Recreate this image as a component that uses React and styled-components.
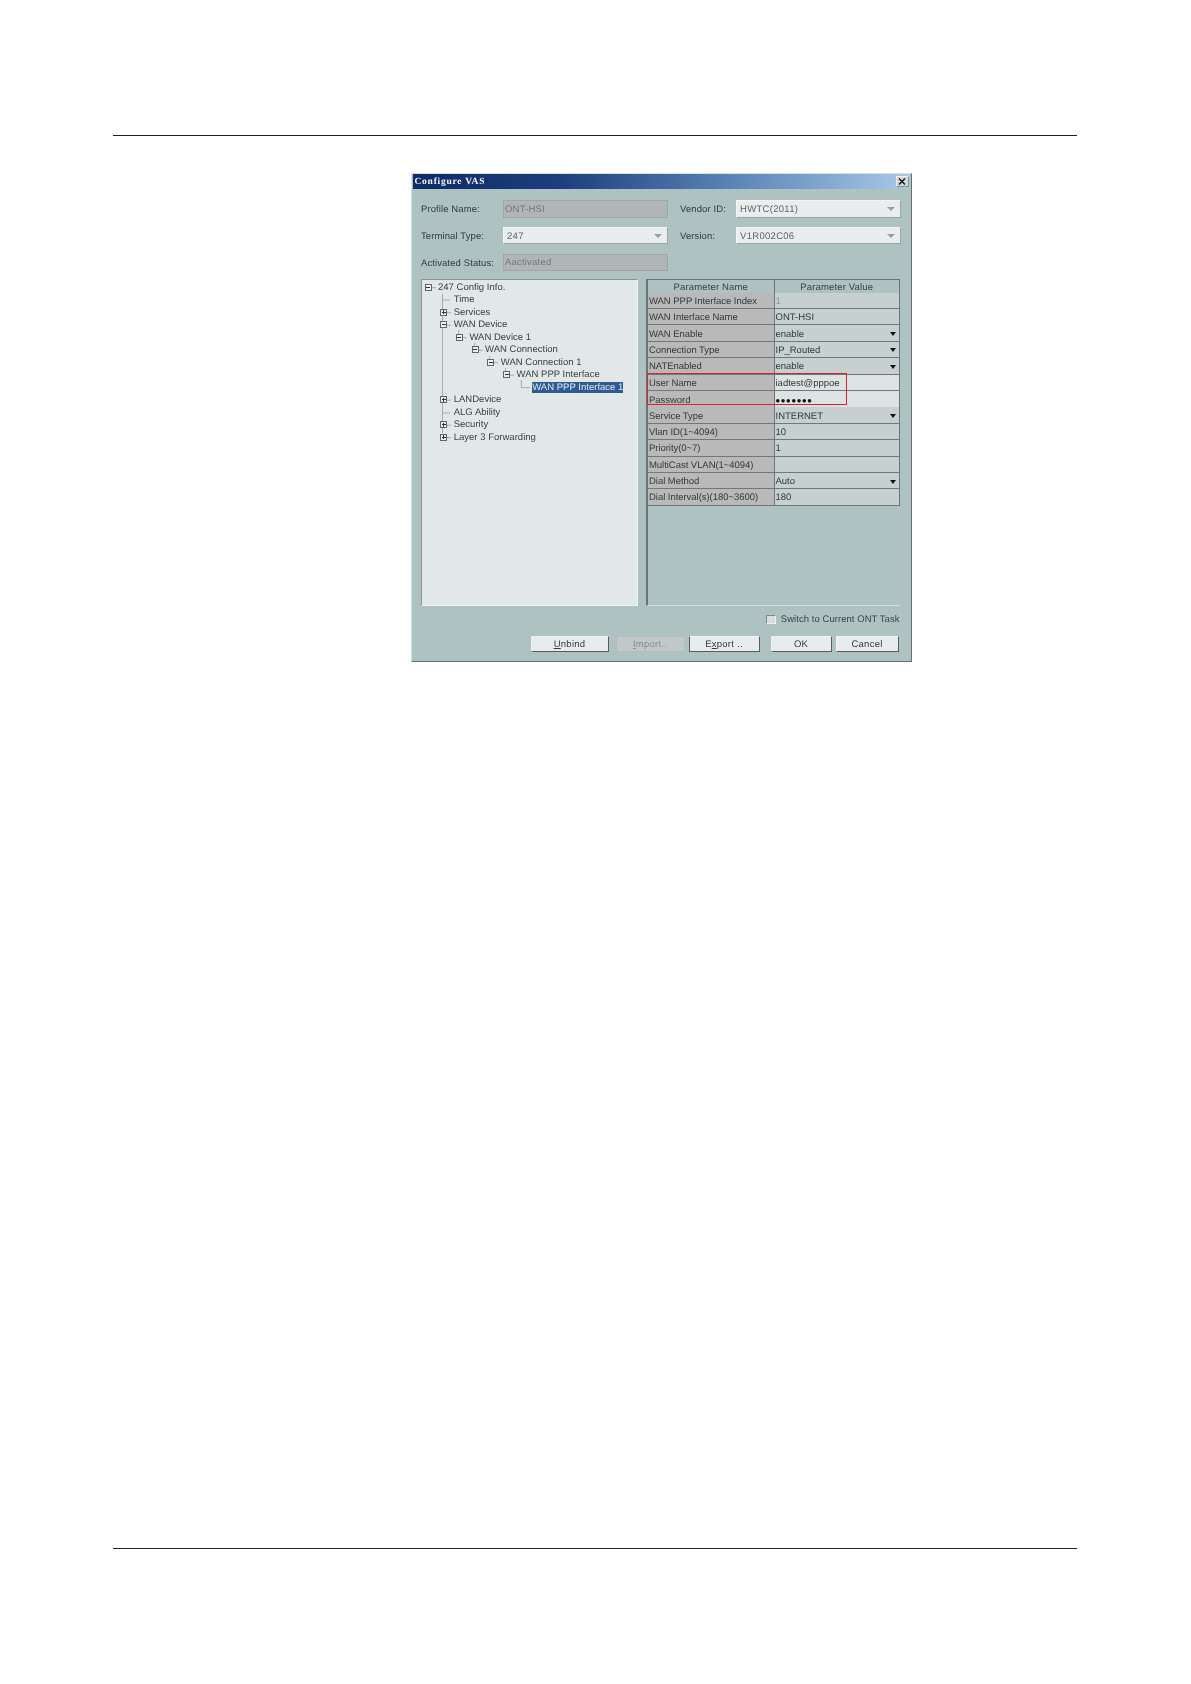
import React from "react";
import styled, { createGlobalStyle } from "styled-components";

const Global = createGlobalStyle`
  html, body { margin: 0; background: #fff; }
  * { box-sizing: border-box; }
`;

const Page = styled.div`
  width: 1191px;
  height: 1684px;
  padding: 135px 114px 135px 113px;
  display: flex;
  flex-direction: column;
  font-family: "Liberation Sans", Arial, sans-serif;
  font-size: 9.5px;
  letter-spacing: 0;
  text-rendering: geometricPrecision;
  color: #2c3232;
`;

const Rule = styled.div`
  height: 1px;
  background: #222;
  flex: none;
  margin-top: ${(p) => (p.$bottom ? "auto" : "0")};
`;

const Dialog = styled.div`
  width: 501px;
  height: 489px;
  margin: 37px 0 0 297.5px;
  background: #aec2c1;
  border: 1.5px solid #d9dddc;
  border-right-color: #6a6f6f;
  border-bottom-color: #6a6f6f;
  display: flex;
  flex-direction: column;
  flex: none;
  filter: blur(0.3px);
`;

const TitleBar = styled.div`
  height: 15px;
  margin: 0 1px;
  padding: 0 1px 0 2px;
  background: linear-gradient(90deg, #0e2a68 0%, #1d3f7e 30%, #5b86b9 65%, #a8c8e6 100%);
  display: flex;
  align-items: center;
  justify-content: space-between;
  flex: none;
`;

const TitleText = styled.span`
  font-family: "Liberation Serif", serif;
  font-weight: 700;
  font-size: 9.5px;
  letter-spacing: 0.75px;
  color: #f4f6f8;
`;

const CloseBox = styled.span`
  width: 13px;
  height: 11px;
  background: #d2d6d6;
  border: 1px solid #8a8f8f;
  border-top-color: #f0f0f0;
  border-left-color: #f0f0f0;
  display: flex;
  align-items: center;
  justify-content: center;
`;

const Form = styled.div`
  display: grid;
  grid-template-columns: 82px 165px 68px 165px;
  grid-auto-rows: 17.5px;
  row-gap: 9.3px;
  padding: 11px 0 0 9.5px;
  align-items: stretch;
  flex: none;
`;

const Label = styled.label`
  display: flex;
  align-items: center;
  padding: 2px 0 0 ${(p) => (p.$side ? "12px" : "0")};
  color: #343a3a;
  letter-spacing: 0.1px;
`;

const ReadOnly = styled.div`
  background: #b1b5b5;
  border: 1px solid #a0a7a7;
  color: #72797a;
  display: flex;
  align-items: center;
  padding: 1px 0 0 1px;
  letter-spacing: 0.2px;
`;

const Combo = styled.div`
  background: #e9eded;
  border-top: 1px solid #f3f5f5;
  border-left: 1px solid #f3f5f5;
  border-right: 1px solid #98a5a5;
  border-bottom: 1px solid #98a5a5;
  color: #5e6666;
  display: flex;
  align-items: center;
  justify-content: space-between;
  padding: 1px 5px 0 3px;
  letter-spacing: 0.3px;
`;

const GrayCaret = styled.span`
  width: 0;
  height: 0;
  border-left: 4.5px solid transparent;
  border-right: 4.5px solid transparent;
  border-top: 4px solid #989e9e;
`;

const Panels = styled.div`
  display: flex;
  gap: 8px;
  margin: 7.5px 0 0 9.5px;
  height: 327px;
  flex: none;
`;

const TreePanel = styled.div`
  position: relative;
  width: 217px;
  background: #e2e8e8;
  border: 1px solid #f0f3f3;
  border-top-color: #8b9595;
  border-left-color: #8b9595;
  padding-top: 0.5px;
`;

const TreeLines = styled.svg`
  position: absolute;
  left: 0;
  top: 0;
  width: 217px;
  height: 170px;
`;

const TreeRow = styled.div`
  position: relative;
  height: 12.5px;
  display: flex;
  align-items: center;
  padding: 2px 0 0 ${(p) => 16 + p.$level * 15.7}px;
  color: #3c4242;
  letter-spacing: 0.02px;
`;

const Expander = styled.span`
  width: 7px;
  height: 7px;
  flex: none;
  margin: 0 6.5px 0 -13.5px;
  background: #eef1f1;
  border: 1px solid #5f6666;
  position: relative;
  &::before {
    content: "";
    position: absolute;
    left: 0.5px;
    right: 0.5px;
    top: 2px;
    height: 1px;
    background: #333;
  }
  &::after {
    content: "";
    display: ${(p) => (p.$open ? "none" : "block")};
    position: absolute;
    top: 0.5px;
    bottom: 0.5px;
    left: 2px;
    width: 1px;
    background: #333;
  }
`;

const TreeLabel = styled.span`
  background: ${(p) => (p.$selected ? "#2e5b93" : "transparent")};
  color: ${(p) => (p.$selected ? "#dfe8f2" : "inherit")};
  line-height: 11px;
`;

const TablePanel = styled.div`
  position: relative;
  width: 254px;
  border-left: 2px solid #697474;
  border-bottom: 1px solid #d5dddd;
  padding-top: 0.5px;
`;

const Table = styled.div`
  border-right: 1px solid #697474;
  border-top: 1px solid #697474;
`;

const HeaderRow = styled.div`
  display: grid;
  grid-template-columns: 125.5px 1fr;
  height: 12.5px;
  border-bottom: 1px solid #697474;
`;

const HeaderCell = styled.div`
  display: flex;
  align-items: center;
  justify-content: center;
  padding-top: 2px;
  background: #afc1c1;
  color: #3a4242;
  letter-spacing: 0.15px;
  & + & { border-left: 1px solid #697474; }
`;

const Row = styled.div`
  display: grid;
  grid-template-columns: 125.5px 1fr;
  height: 16.4px;
  border-bottom: 1px solid #6f7878;
`;

const NameCell = styled.div`
  background: #b9b9b9;
  color: #333939;
  display: flex;
  align-items: center;
  padding: 2px 0 0 1px;
  white-space: nowrap;
  letter-spacing: -0.04px;
`;

const ValueCell = styled.div`
  background: ${(p) => (p.$light ? "#dde3e3" : "#c7d0d1")};
  border-left: 1px solid #6f7878;
  color: ${(p) => (p.$muted ? "#8f9a9a" : "#333939")};
  display: flex;
  align-items: center;
  justify-content: space-between;
  padding: 2px 3px 0 1px;
`;

const Bullets = styled.span`
  font-size: 13px;
  letter-spacing: 0.75px;
  color: #111;
`;

const BlackCaret = styled.span`
  width: 0;
  height: 0;
  border-left: 3.8px solid transparent;
  border-right: 3.8px solid transparent;
  border-top: 4px solid #111;
`;

const Highlight = styled.div`
  position: absolute;
  left: -1px;
  top: 94px;
  width: 200px;
  height: 32px;
  border: 1px solid #d8232e;
  pointer-events: none;
`;

const CheckRow = styled.div`
  display: flex;
  justify-content: flex-end;
  align-items: center;
  gap: 5px;
  padding-right: 11px;
  margin-top: 9px;
  height: 10px;
  color: #3d4444;
  flex: none;
  letter-spacing: 0.05px;
`;

const CheckBox = styled.span`
  width: 9.5px;
  height: 9.5px;
  background: #d8dddd;
  border: 1px solid #7f8a8a;
  border-right-color: #eef1f1;
  border-bottom-color: #eef1f1;
`;

const Buttons = styled.div`
  display: flex;
  margin: 11.5px 0 0 119px;
  flex: none;
`;

const Button = styled.div`
  width: ${(p) => p.$w}px;
  margin-right: ${(p) => p.$gap}px;
  height: 16px;
  display: flex;
  align-items: center;
  justify-content: center;
  padding-top: 1.5px;
  background: ${(p) => (p.$disabled ? "#c0c8c8" : "#e8ecec")};
  color: ${(p) => (p.$disabled ? "#858e8e" : "#343a3a")};
  border: 1px solid ${(p) => (p.$disabled ? "#b5bcbc" : "#f0f2f2")};
  border-right-color: ${(p) => (p.$disabled ? "#b5bcbc" : "#565d5d")};
  border-bottom-color: ${(p) => (p.$disabled ? "#b5bcbc" : "#565d5d")};
  border-left-color: ${(p) => (p.$dark ? "#565d5d" : p.$disabled ? "#b5bcbc" : "#f0f2f2")};
  letter-spacing: 0.25px;
`;

const tree = [
  { level: 0, text: "247 Config Info.", open: true },
  { level: 1, text: "Time", leaf: true },
  { level: 1, text: "Services" },
  { level: 1, text: "WAN Device", open: true },
  { level: 2, text: "WAN Device 1", open: true },
  { level: 3, text: "WAN Connection", open: true },
  { level: 4, text: "WAN Connection 1", open: true },
  { level: 5, text: "WAN PPP Interface", open: true },
  { level: 6, text: "WAN PPP Interface 1", leaf: true, selected: true },
  { level: 1, text: "LANDevice" },
  { level: 1, text: "ALG Ability", leaf: true },
  { level: 1, text: "Security" },
  { level: 1, text: "Layer 3 Forwarding" },
];

const rows = [
  { name: "WAN PPP Interface Index", value: "1", muted: true },
  { name: "WAN Interface Name", value: "ONT-HSI" },
  { name: "WAN Enable", value: "enable", caret: true },
  { name: "Connection Type", value: "IP_Routed", caret: true },
  { name: "NATEnabled", value: "enable", caret: true },
  { name: "User Name", value: "iadtest@pppoe", light: true },
  { name: "Password", value: <Bullets>•••••••</Bullets>, light: true },
  { name: "Service Type", value: "INTERNET", caret: true },
  { name: "Vlan ID(1~4094)", value: "10" },
  { name: "Priority(0~7)", value: "1" },
  { name: "MultiCast VLAN(1~4094)", value: "" },
  { name: "Dial Method", value: "Auto", caret: true },
  { name: "Dial Interval(s)(180~3600)", value: "180" },
];

export default function App() {
  return (
    <Page>
      <Global />
      <Rule />
      <Dialog>
        <TitleBar>
          <TitleText>Configure VAS</TitleText>
          <CloseBox>
            <svg width="8" height="7" viewBox="0 0 8 7">
              <path d="M1 0.5 L7 6.5 M7 0.5 L1 6.5" stroke="#111" strokeWidth="1.4" />
            </svg>
          </CloseBox>
        </TitleBar>
        <Form>
          <Label>Profile Name:</Label>
          <ReadOnly>ONT-HSI</ReadOnly>
          <Label $side>Vendor ID:</Label>
          <Combo>HWTC(2011)<GrayCaret /></Combo>
          <Label>Terminal Type:</Label>
          <Combo>247<GrayCaret /></Combo>
          <Label $side>Version:</Label>
          <Combo>V1R002C06<GrayCaret /></Combo>
          <Label>Activated Status:</Label>
          <ReadOnly>Aactivated</ReadOnly>
        </Form>
        <Panels>
          <TreePanel>
            <TreeLines viewBox="0 0 217 170">
              <path
                d="M20.5 14V153 M20.5 20H28 M20.5 133H28 M9 7.7H14 M24.5 32.7H29 M24.5 45.2H29 M24.5 120.2H29 M24.5 145.2H29 M24.5 157.7H29 M40 57.7H45 M56 70.2H61 M71 82.7H76 M87 95.2H92 M36.7 50V54 M52.7 63V66.5 M67.7 76V79 M83.7 88V91.5 M99.3 100V107.7H108"
                stroke="#a3adad"
                strokeWidth="1"
                fill="none"
              />
            </TreeLines>
            {tree.map((t) => (
              <TreeRow key={t.text} $level={t.level}>
                {t.leaf ? null : <Expander $open={t.open} />}
                <TreeLabel $selected={t.selected}>{t.text}</TreeLabel>
              </TreeRow>
            ))}
          </TreePanel>
          <TablePanel>
            <Table>
              <HeaderRow>
                <HeaderCell>Parameter Name</HeaderCell>
                <HeaderCell>Parameter Value</HeaderCell>
              </HeaderRow>
              {rows.map((r) => (
                <Row key={r.name}>
                  <NameCell>{r.name}</NameCell>
                  <ValueCell $light={r.light} $muted={r.muted}>
                    {r.value}
                    {r.caret ? <BlackCaret /> : null}
                  </ValueCell>
                </Row>
              ))}
            </Table>
            <Highlight />
          </TablePanel>
        </Panels>
        <CheckRow>
          <CheckBox />
          Switch to Current ONT Task
        </CheckRow>
        <Buttons>
          <Button $w={78} $gap={7}><span><u>U</u>nbind</span></Button>
          <Button $w={69} $gap={4} $disabled><span><u>I</u>mport..</span></Button>
          <Button $w={71} $gap={11} $dark><span>E<u>x</u>port ..</span></Button>
          <Button $w={61} $gap={4}>OK</Button>
          <Button $w={63} $gap={0}>Cancel</Button>
        </Buttons>
      </Dialog>
      <Rule $bottom />
    </Page>
  );
}
